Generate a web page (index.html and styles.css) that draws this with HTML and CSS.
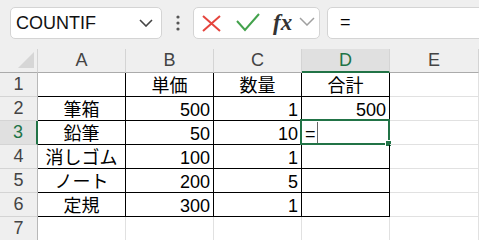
FILE: index.html
```html
<!DOCTYPE html>
<html lang="ja">
  <head>
    <meta charset="UTF-8">
    <title>Book1</title>
    <link rel="stylesheet" href="styles.css">
  </head>
  <body>
    <div class="toolbar">
      <div class="name-box">
        <span>COUNTIF</span>
        <svg width="14" height="8" viewBox="0 0 14 8"><path d="M1 1 L7 7 L13 1" fill="none" stroke="#444" stroke-width="1.6"/></svg>
      </div>

      <div class="dots">
        <svg width="4" height="16" viewBox="0 0 4 16"><circle cx="2" cy="2" r="1.6" fill="#555"/><circle cx="2" cy="8" r="1.6" fill="#555"/><circle cx="2" cy="14" r="1.6" fill="#555"/></svg>
      </div>

      <div class="fx-group">
        <svg class="cancel" width="19" height="17" viewBox="0 0 19 17"><path d="M1 1 L18 16 M18 1 L1 16" stroke="#e5443d" stroke-width="2" fill="none"/></svg>
        <svg class="enter" width="24" height="19" viewBox="0 0 24 19"><path d="M1 8 L9 17 L23 1" stroke="#43a24c" stroke-width="2" fill="none"/></svg>
        <span class="fx">fx</span>
        <svg class="more" width="16" height="9" viewBox="0 0 16 9"><path d="M1 1 L8 8 L15 1" fill="none" stroke="#a0a0a0" stroke-width="1.5"/></svg>
      </div>

      <div class="formula">=</div>
    </div>

    <div class="sheet">
      <div class="corner"><svg width="16" height="16" viewBox="0 0 16 16"><polygon points="16,0 16,16 0,16" fill="#d6d6d6"/></svg></div>
      <div class="ch">A</div>
      <div class="ch">B</div>
      <div class="ch">C</div>
      <div class="ch active">D</div>
      <div class="ch">E</div>

      <div class="rh">1</div>
      <div class="c t"></div>
      <div class="c t mid">単価</div>
      <div class="c t mid">数量</div>
      <div class="c t mid">合計</div>
      <div class="c"></div>

      <div class="rh">2</div>
      <div class="c t mid">筆箱</div>
      <div class="c t num">500</div>
      <div class="c t num">1</div>
      <div class="c t num">500</div>
      <div class="c"></div>

      <div class="rh active">3</div>
      <div class="c t mid">鉛筆</div>
      <div class="c t num">50</div>
      <div class="c t num">10</div>
      <div class="c t edit">=<span class="caret"></span><div class="selection"><span class="handle"></span></div></div>
      <div class="c"></div>

      <div class="rh">4</div>
      <div class="c t mid">消しゴム</div>
      <div class="c t num">100</div>
      <div class="c t num">1</div>
      <div class="c t"></div>
      <div class="c"></div>

      <div class="rh">5</div>
      <div class="c t mid">ノート</div>
      <div class="c t num">200</div>
      <div class="c t num">5</div>
      <div class="c t"></div>
      <div class="c"></div>

      <div class="rh">6</div>
      <div class="c t mid">定規</div>
      <div class="c t num">300</div>
      <div class="c t num">1</div>
      <div class="c t"></div>
      <div class="c"></div>

      <div class="rh">7</div>
      <div class="c"></div>
      <div class="c"></div>
      <div class="c"></div>
      <div class="c"></div>
      <div class="c"></div>
    </div>
  </body>
</html>
```

FILE: styles.css
```css
* {
  margin: 0;
  padding: 0;
  box-sizing: border-box;
}

body {
  width: 479px;
  height: 240px;
  overflow: hidden;
  background: #ffffff;
  font-family: "Liberation Sans", "Noto Sans CJK JP", sans-serif;
  color: #000000;
}

.toolbar {
  display: flex;
  align-items: flex-start;
  height: 49px;
  padding: 7px 0 0 10px;
  background: #efefef;
  overflow: hidden;
}

.name-box {
  display: flex;
  align-items: center;
  justify-content: space-between;
  width: 152px;
  height: 32px;
  padding: 0 8px 0 5px;
  background: #ffffff;
  border: 1px solid #d4d4d4;
  border-radius: 5px;
  font-size: 18px;
  line-height: 20px;
  color: #111111;
}

.dots {
  display: flex;
  justify-content: center;
  width: 31px;
  padding-top: 8px;
}

.fx-group {
  display: flex;
  align-items: center;
  width: 127px;
  height: 32px;
  padding-left: 8px;
  background: #ffffff;
  border: 1px solid #d4d4d4;
  border-radius: 5px;
}

.fx-group .enter {
  margin-left: 15px;
  margin-top: -2px;
}

.fx-group .fx {
  margin-left: 13px;
  font-family: "Liberation Serif", serif;
  font-style: italic;
  font-weight: bold;
  font-size: 23px;
  line-height: 24px;
  color: #333333;
}

.fx-group .more {
  margin-left: 7px;
  margin-top: -3px;
}

.formula {
  flex-grow: 1;
  height: 32px;
  margin-left: 7px;
  margin-right: -12px;
  padding-left: 12px;
  background: #ffffff;
  border: 1px solid #d4d4d4;
  border-radius: 5px;
  font-size: 18px;
  line-height: 29px;
}

.sheet {
  display: grid;
  grid-template-columns: 38px 88px 88px 88px 88px 89px;
  grid-auto-rows: 24px;
  font-size: 18px;
}

.corner {
  display: flex;
  justify-content: flex-end;
  align-items: flex-end;
  padding: 0 3px 4px 0;
  background: #efefef;
  border-right: 1px solid #d4d4d4;
  border-bottom: 1px solid #ababab;
}

.ch {
  text-align: center;
  line-height: 23px;
  color: #444444;
  background: #efefef;
  border-right: 1px solid #d4d4d4;
  border-bottom: 1px solid #ababab;
}

.ch.active {
  color: #217346;
  background: #e0e0e0;
  border-bottom: 2px solid #217346;
}

.rh {
  text-align: center;
  line-height: 23px;
  color: #444444;
  background: #efefef;
  border-right: 1px solid #b8b8b8;
  border-bottom: 1px solid #d4d4d4;
}

.rh.active {
  color: #217346;
  background: #e0e0e0;
  border-right: 2px solid #217346;
}

.c {
  position: relative;
  display: flex;
  align-items: flex-end;
  padding: 0 3px;
  line-height: 19px;
  white-space: nowrap;
  border-right: 1px solid #e1e1e1;
  border-bottom: 1px solid #e1e1e1;
}

.c.t {
  border-right-color: #000000;
  border-bottom-color: #000000;
}

.c.mid {
  justify-content: center;
}

.c.num {
  justify-content: flex-end;
}

.edit .caret {
  display: block;
  width: 1px;
  height: 21px;
  margin-left: 1px;
  margin-bottom: 1px;
  background: #666666;
}

.selection {
  position: absolute;
  left: -2px;
  top: -2px;
  right: -1px;
  bottom: -1px;
  border: 2px solid #217346;
}

.selection .handle {
  position: absolute;
  right: -4px;
  bottom: -4px;
  width: 7px;
  height: 7px;
  background: #217346;
  border: 1px solid #ffffff;
}
```
